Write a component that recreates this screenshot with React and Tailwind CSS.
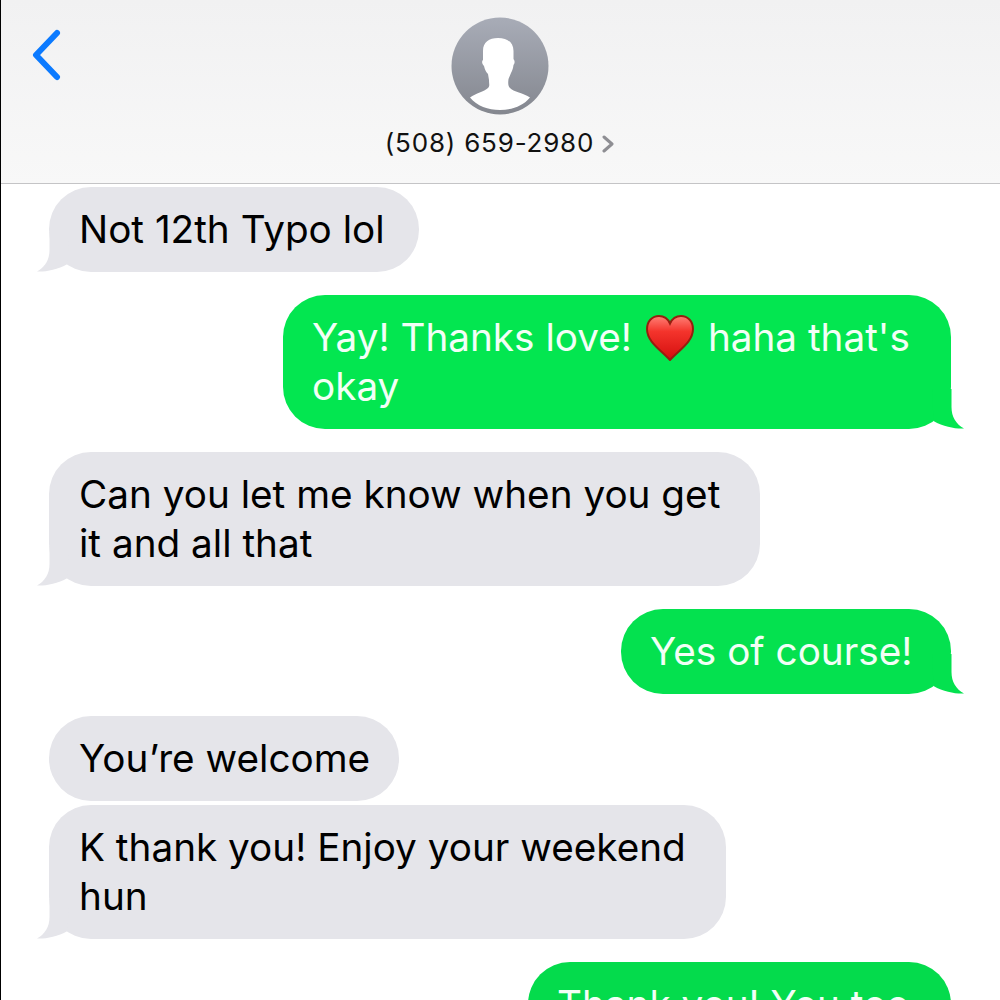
import React from "react";

const messages = [
  { id: 1, lines: ["Not 12th Typo lol"], width: "w-[370px]", gap: "mt-[3px]", tail: true, color: "bg-[#e5e5ea] fill-[#e5e5ea]" },
  { id: 2, me: true, lines: [["Yay! Thanks love!", "haha that's"], "okay"], width: "w-[668px]", gap: "mt-[23px]", tail: true, color: "bg-[#03e650] fill-[#03e650]" },
  { id: 3, lines: ["Can you let me know when you get", "it and all that"], width: "w-[711px]", gap: "mt-[23px]", tail: true, color: "bg-[#e5e5ea] fill-[#e5e5ea]" },
  { id: 4, me: true, lines: ["Yes of course!"], width: "w-[330px]", gap: "mt-[23px]", tail: true, color: "bg-[#04e14f] fill-[#04e14f]" },
  { id: 5, lines: ["You’re welcome"], width: "w-[350px]", gap: "mt-[22px]", color: "bg-[#e5e5ea] fill-[#e5e5ea]" },
  { id: 6, lines: ["K thank you! Enjoy your weekend", "hun"], width: "w-[677px]", gap: "mt-[4px]", tail: true, color: "bg-[#e5e5ea] fill-[#e5e5ea]" },
  { id: 7, me: true, lines: ["Thank you! You too"], width: "w-[423px]", gap: "mt-[23px]", color: "bg-[#04db4c] fill-[#04db4c]" },
];

const Heart = () => (
  <svg viewBox="0 0 48 46" className="mx-[14px] h-[46px] w-[48px] shrink-0">
    <defs>
      <linearGradient id="heartFill" x1="0" y1="0" x2="0" y2="1">
        <stop offset="0" stopColor="#ff8076" />
        <stop offset="0.35" stopColor="#f4342c" />
        <stop offset="1" stopColor="#d40e0e" />
      </linearGradient>
    </defs>
    <path
      d="M24 45C15 35 1 27 1 14C1 6 6.500 1 13 1C18 1 22 4 24 8.500C26 4 30 1 35 1C41.500 1 47 6 47 14C47 27 33 35 24 45Z"
      fill="url(#heartFill)"
      stroke="#94200f"
      strokeWidth="2"
    />
  </svg>
);

const Tail = ({ me }) => (
  <svg
    viewBox="0 0 32 40"
    className={`absolute bottom-0 h-[40px] w-[32px] ${me ? "right-[-12.500px] -scale-x-100" : "left-[-12.500px]"}`}
  >
    <path d="M12.500 0L12.500 18C12.500 28 8 35 0 39.500C8 40 20 38 30.500 32L32 0Z" />
  </svg>
);

const Bubble = ({ message }) => {
  const { me, lines, width, gap, tail, color } = message;
  return (
    <div className={`flex ${gap} ${me ? "justify-end pr-[49px]" : "justify-start pl-[48px]"}`}>
      <div
        className={`relative rounded-[42px] py-[18px] text-[38.7px] leading-[49px] ${width} ${color} ${
          me ? "pl-[29px] text-[#f2fff6]" : "pl-[30px] text-black"
        }`}
      >
        {tail && <Tail me={me} />}
        {lines.map((line, i) =>
          Array.isArray(line) ? (
            <div key={i} className="relative flex items-center whitespace-nowrap">
              <span>{line[0]}</span>
              <Heart />
              <span>{line[1]}</span>
            </div>
          ) : (
            <div key={i} className="relative whitespace-nowrap">
              {line}
            </div>
          )
        )}
      </div>
    </div>
  );
};

const Header = () => (
  <div className="grid h-[184px] grid-cols-[1fr_auto_1fr] border-b border-[#c4c4c6] bg-gradient-to-b from-[#f1f1f2] to-[#f8f8f8] pr-[2px]">
    <div className="pl-[31px] pt-[29px]">
      <svg viewBox="0 0 31 52" className="h-[52px] w-[31px]" fill="none" stroke="#0b7aff" strokeWidth="6" strokeLinecap="round" strokeLinejoin="round">
        <path d="M25 4L4 26L25 48" />
      </svg>
    </div>
    <div className="flex flex-col items-center pt-[17px]">
      <svg viewBox="0 0 98 98" className="h-[98px] w-[98px]">
        <defs>
          <linearGradient id="avatarFill" x1="0" y1="0" x2="0" y2="1">
            <stop offset="0" stopColor="#a8acb7" />
            <stop offset="1" stopColor="#84878f" />
          </linearGradient>
        </defs>
        <circle cx="49" cy="49" r="48.500" fill="url(#avatarFill)" />
        <path
          d="M47 21C38 21 32 25 32 34L32 43C30.500 44 31 47 33 49C34 53 35 55 37 57L38 63C38 67 39 69 37 71C33 75 25 76 19 80.500C26 89 37 93 49 93C61 93 72 89 79 80.500C73 76 62 75 59 71C57 69 57 66 57.500 62L60 56C61 54 62 52 62.500 48C64 46 64 44 62.500 42L62.500 34C62.500 25 56 21 47 21Z"
          fill="#ffffff"
        />
      </svg>
      <div className="mt-[13px] flex items-center whitespace-nowrap text-[26px] leading-[30px] tracking-[0.8px] text-[#111]">
        <span>(508) 659-2980</span>
        <svg viewBox="0 0 12 18" className="ml-[8px] mt-[2px] h-[18px] w-[12px]" fill="none" stroke="#8e8e93" strokeWidth="3" strokeLinecap="round" strokeLinejoin="round">
          <path d="M2 2L10 9L2 16" />
        </svg>
      </div>
    </div>
    <div />
  </div>
);

export default function App() {
  return (
    <div className="h-[1000px] w-[1000px] overflow-hidden border-l border-black bg-white font-['Inter','Liberation_Sans',sans-serif]">
      <Header />
      {messages.map((message) => (
        <Bubble key={message.id} message={message} />
      ))}
    </div>
  );
}
